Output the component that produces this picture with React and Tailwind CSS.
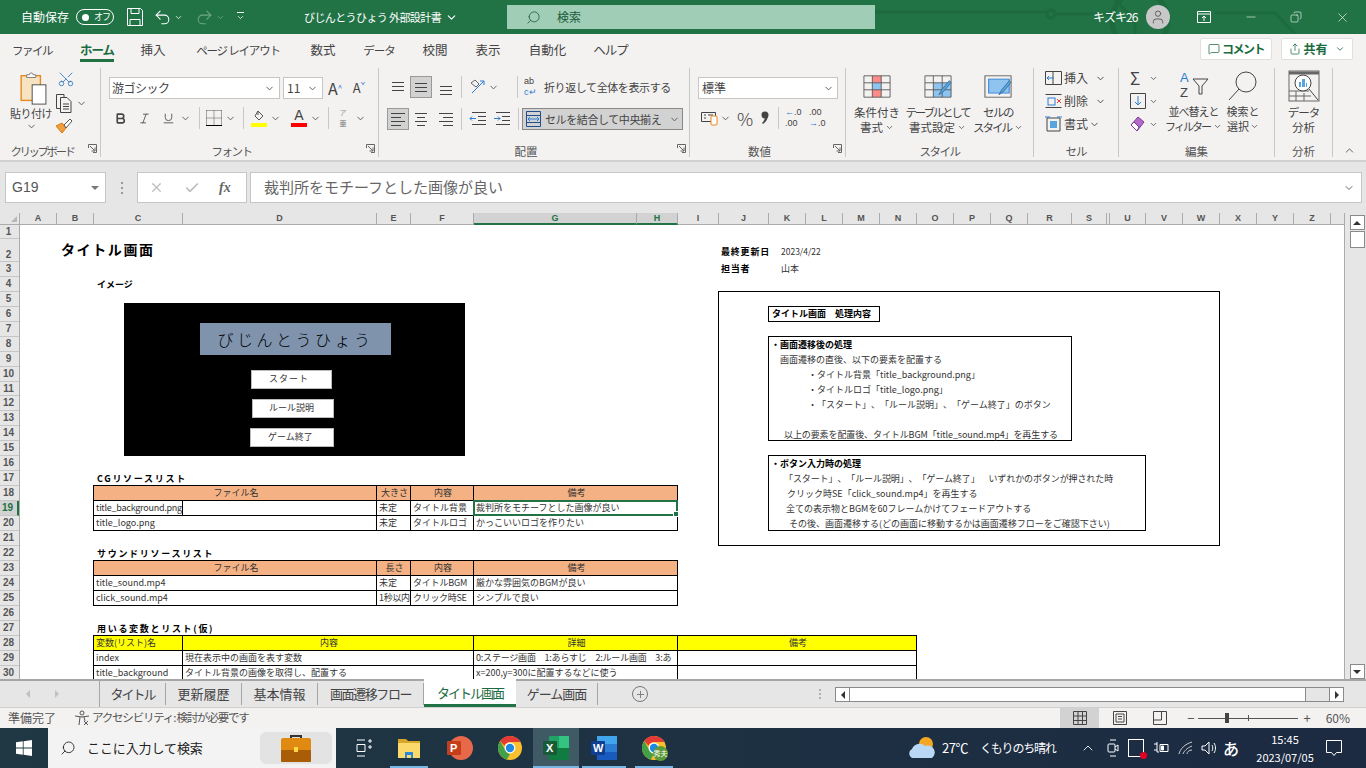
import React from "react";
import {
  ChevronDown, ChevronUp, Search, Undo2, Redo2, User, Minus, Copy, X, Check, MessageSquare, Share,
  Scissors, Bold, Italic, Underline, Plus,
} from "lucide-react";

const Chev = ({ className = "text-[#555]", size = 11 }) => (
  <ChevronDown size={size} strokeWidth={2} className={`shrink-0 ${className}`} />
);

// three short rules, used by all the alignment buttons
const Lines = ({ rows }) => (
  <svg width="18" height="18" viewBox="0 0 18 18" stroke="#444" strokeWidth="1">
    {rows.map((r, i) => (
      <line key={i} x1={r[0]} x2={r[1]} y1={r[2] + 0.5} y2={r[2] + 0.5} />
    ))}
  </svg>
);

const Launcher = () => (
  <svg width="9" height="9" viewBox="0 0 9 9" fill="none" stroke="#666" className="absolute right-[3px] bottom-[4px]">
    <path d="M.5 4V.5h8v8H5M2 2l5 5M7 3.5V7H3.5" />
  </svg>
);

const Group = ({ width, label, labelClass = "", launcher, children }) => (
  <div className={`relative flex h-[89px] shrink-0 flex-col border-r border-[#c8c8c8] ${width}`}>
    <div className="h-[76px]">{children}</div>
    <div className={`mt-[2px] h-[12px] text-center text-[11.5px] leading-[12px] whitespace-nowrap text-[#555] ${labelClass}`}>{label}</div>
    {launcher && <Launcher />}
  </div>
);

const Sep = ({ className }) => <div className={`h-[22px] w-px shrink-0 bg-[#c8c8c8] ${className}`} />;

const PasteIcon = () => (
  <svg width="30" height="33" viewBox="0 0 30 36" fill="none" className="ml-[5px]">
    <rect x="1" y="4" width="21" height="27" fill="#f7e3c0" stroke="#e8871e" strokeWidth="1.5" />
    <path d="M7 6V3h3a2 2 0 0 1 4 0h3v3z" fill="#fff" stroke="#777" />
    <rect x="13" y="14" width="15" height="21" fill="#fff" stroke="#444" />
  </svg>
);

const CopyIcon = () => (
  <svg width="18" height="20" viewBox="0 0 18 20" fill="none" stroke="#444">
    <path d="M5 15.5H1.5V1.5H9V4" />
    <path d="M5.5 4.5H12l4 4v11H5.5z" />
    <path d="M8 11h6M8 13.5h6M8 16h6" />
  </svg>
);

const BrushIcon = () => (
  <svg width="18" height="18" viewBox="0 0 18 18" fill="none">
    <path d="M1 9l6 7 4-5-4-5z" fill="#f2a03d" stroke="#d67a14" />
    <path d="M9 8l6-6 2 2-6 7z" fill="#fff" stroke="#555" />
  </svg>
);

const Grid = ({ fill, tint }) => (
  <svg width="28" height="23" viewBox="0 0 30 28" fill="none" preserveAspectRatio="none">
    {fill}
    <path d="M1 1h28v26H1zM1 9.5h28M1 18h28M10 1v26M19.5 1v26" stroke="#555" />
    {tint}
  </svg>
);

const Pen = () => (
  <path d="M16 24l3-6 8-11 2 2-8 11z" fill="#5aa4dd" stroke="#3a6f9c" />
);

const SmallIcon = ({ children }) => (
  <svg width="18" height="16" viewBox="0 0 18 16" fill="none">{children}</svg>
);

const Chrome = ({ size = 24 }) => (
  <svg width={size} height={size} viewBox="0 0 24 24">
    <circle cx="12" cy="12" r="12" fill="#fbc02d" />
    <path d="M12 0a12 12 0 0 1 10.4 6H12a6 6 0 0 0-5.6 3.8L2.2 5A12 12 0 0 1 12 0z" fill="#e53935" />
    <path d="M2.2 5l5.2 9.2A6 6 0 0 0 12 18l-3.2 5.6A12 12 0 0 1 2.2 5z" fill="#43a047" />
    <circle cx="12" cy="12" r="5.4" fill="#fff" />
    <circle cx="12" cy="12" r="4.2" fill="#1e88e5" />
  </svg>
);

const TitleBar = () => (
  <div className="relative flex h-[34px] shrink-0 items-center whitespace-nowrap bg-[#217346] text-white">
    <svg width="491" height="34" viewBox="0 0 491 34" fill="none" stroke="#1c6a3e" strokeWidth="3" className="absolute top-0 right-0">
      <path d="M0 12h172M180 14l60 0M240 0l20 20v14M340 13h60l20 21" />
      <circle cx="176" cy="14" r="4" />
      <circle cx="265" cy="20" r="28" strokeWidth="5" />
    </svg>
    <span className="ml-[21px] w-[48px] shrink-0 text-[12px]">自動保存</span>
    <div className="ml-[7px] flex h-[16px] w-[38px] shrink-0 items-center rounded-full border border-white pl-[5px] text-[9px]">
      <span className="h-[7px] w-[7px] rounded-full bg-white" />
      <span className="ml-[5px] tracking-[-1px]">オフ</span>
    </div>
    <svg width="16" height="18" viewBox="0 0 16 18" fill="none" stroke="#fff" className="ml-[13px] shrink-0">
      <path d="M.5.5h13l2 2v15H.5zM4 .5v5h8v-5M3 17.5v-6h10v6" />
    </svg>
    <Undo2 size={19} strokeWidth={1.3} className="ml-[10px] shrink-0" />
    <Chev className="ml-[2px] text-white" size={9} />
    <Redo2 size={19} strokeWidth={1.3} className="ml-[12px] shrink-0 text-[#6fa888]" />
    <Chev className="ml-[2px] text-[#6fa888]" size={9} />
    <div className="ml-[7px] flex w-[16px] shrink-0 flex-col items-center">
      <div className="h-px w-[7px] bg-white" />
      <Chev className="text-white" size={9} />
    </div>
    <span className="ml-[56px] w-[138px] shrink-0 text-[11px] tracking-[-0.6px]">びじんとうひょう 外部設計書</span>
    <Chev className="ml-[3px] text-white" size={13} />
    <div className="relative ml-[49px] flex h-[24px] w-[368px] shrink-0 items-center bg-[#a0cdb5] text-[#1d5c3a]">
      <Search size={15} strokeWidth={1.3} className="ml-[19px] -scale-x-100" />
      <span className="ml-[16px] text-[12px]">検索</span>
    </div>
    <span className="relative ml-[218px] w-[44px] shrink-0 text-[12px] tracking-[-1px]">キズキ26</span>
    <div className="relative ml-[9px] flex h-[24px] w-[24px] shrink-0 items-center justify-center rounded-full bg-[#c8c8c8]">
      <User size={16} strokeWidth={1.3} className="text-[#555]" />
    </div>
    <svg width="14" height="14" viewBox="0 0 14 14" fill="none" stroke="#fff" className="relative ml-[27px] shrink-0">
      <path d="M.5 1.5h13v11H.5zM.5 4h13M7 11V6M5 8l2-2 2 2" />
    </svg>
    <Minus size={14} strokeWidth={1} className="relative ml-[33px] shrink-0" />
    <Copy size={12} strokeWidth={1.2} className="relative ml-[32px] shrink-0 -scale-x-100" />
    <X size={15} strokeWidth={1} className="relative ml-[33px] shrink-0" />
  </div>
);

const TABS = [
  ["ファイル", "w-[38px] ml-[13px] text-[11.5px] tracking-[-1.5px]"],
  ["ホーム", "w-[34px] ml-[29px] font-bold text-[#1b6b40] border-b-[3px] border-[#217346] tracking-[-1px]"],
  ["挿入", "w-[26px] ml-[26px]"],
  ["ページ レイアウト", "w-[86px] ml-[29px] text-[11.5px] tracking-[-1.2px]"],
  ["数式", "w-[26px] ml-[29px]"],
  ["データ", "w-[32px] ml-[27px] text-[11.5px] tracking-[-1px]"],
  ["校閲", "w-[26px] ml-[27px]"],
  ["表示", "w-[26px] ml-[27px]"],
  ["自動化", "w-[39px] ml-[27px]"],
  ["ヘルプ", "w-[33px] ml-[27px] tracking-[-1px]"],
];

const TabRow = () => (
  <div className="flex h-[32px] shrink-0 items-start bg-[#f3f2f1] text-[12.5px] whitespace-nowrap text-[#444]">
    {TABS.map(([t, c]) => (
      <div key={t} className={`mt-[7px] flex h-[21px] justify-center leading-[18px] ${c}`}>{t}</div>
    ))}
    <div className="mt-[4px] ml-auto flex h-[22px] w-[72px] items-center justify-center gap-[2px] rounded-[2px] border border-[#e1dfdd] bg-white text-[12px] font-bold tracking-[-1.5px] text-[#1b6b40]">
      <MessageSquare size={12} strokeWidth={1.5} />コメント
    </div>
    <div className="mt-[4px] mr-[13px] ml-[9px] flex h-[22px] w-[72px] items-center justify-center gap-[2px] rounded-[2px] border border-[#e1dfdd] bg-white text-[12px] font-bold text-[#1b6b40]">
      <Share size={12} strokeWidth={1.5} />共有<Chev className="ml-[5px] text-[#1b6b40]" size={10} />
    </div>
  </div>
);

const Ribbon = () => (
  <div className="flex h-[96px] shrink-0 border-b-2 border-[#d2d0ce] bg-[#f3f2f1] pt-[2px] text-[#444]">
    {/* clipboard */}
    <Group width="w-[101px]" label="クリップボード" labelClass="pr-[16px] tracking-[-2.5px]" launcher>
      <div className="flex">
        <div className="flex w-[55px] flex-col items-center pt-[4px] pl-[7px]">
          <PasteIcon />
          <span className="text-[11px] leading-[16px] tracking-[-0.5px] whitespace-nowrap">貼り付け</span>
          <Chev />
        </div>
        <div className="flex flex-col items-start pt-[2px]">
          <Scissors size={18} strokeWidth={1.2} className="ml-[2px] -rotate-90 text-[#3a7fc0]" />
          <div className="mt-[5px] flex items-center"><CopyIcon /><Chev className="ml-[3px] text-[#555]" /></div>
          <div className="mt-[4px]"><BrushIcon /></div>
        </div>
      </div>
    </Group>

    {/* font */}
    <Group width="w-[278px]" label="フォント" labelClass="pr-[16px] tracking-[-1.5px]" launcher>
      <div className="flex items-center pt-[9px] pl-[8px]">
        <div className="flex h-[22px] w-[171px] items-center justify-between border border-[#c8c6c4] bg-white pr-[4px] pl-[2px] text-[12px] tracking-[-0.5px]">游ゴシック<Chev /></div>
        <div className="ml-[3px] flex h-[22px] w-[40px] items-center justify-between border border-[#c8c6c4] bg-white pr-[4px] pl-[3px] text-[12px]">11<Chev /></div>
        <span className="w-[24px] text-center text-[16px] leading-[22px]">A<sup className="text-[8px] text-[#2b7cd3]">^</sup></span>
        <span className="w-[24px] text-center text-[13px] leading-[22px]">A<sup className="text-[8px] text-[#2b7cd3]">ˇ</sup></span>
      </div>
      <div className="mt-[8px] flex h-[22px] items-center pl-[13px]">
        <Bold size={13} strokeWidth={3} />
        <Italic size={13} strokeWidth={1.5} className="ml-[11px]" />
        <Underline size={13} strokeWidth={1.5} className="ml-[11px]" />
        <Chev className="ml-[5px] text-[#555]" />
        <Sep className="ml-[8px]" />
        <svg width="16" height="16" viewBox="0 0 16 16" fill="none" stroke="#555" strokeDasharray="1 1" className="ml-[6px]">
          <path d="M.5.5h15M.5 8h15M8 .5v15M.5.5v15M15.5.5v15" />
          <path d="M0 15.5h16" stroke="#000" strokeDasharray="none" />
        </svg>
        <Chev className="ml-[3px] text-[#555]" />
        <Sep className="ml-[7px]" />
        <div className="ml-[7px] flex w-[16px] flex-col items-center">
          <svg width="14" height="12" viewBox="0 0 14 12" fill="none" stroke="#555"><path d="M6 1l5 5-4 4-4-4zM6 1v4" /></svg>
          <div className="mt-[1px] h-[4px] w-[16px] bg-[#ffff00]" />
        </div>
        <Chev className="ml-[3px] text-[#555]" />
        <div className="ml-[10px] flex w-[16px] flex-col items-center font-['Liberation_Sans',sans-serif] text-[14px] leading-[13px]">
          A<div className="mt-[1px] h-[4px] w-[16px] bg-[#ff0000]" />
        </div>
        <Chev className="ml-[3px] text-[#555]" />
        <Sep className="ml-[7px]" />
        <div className="ml-[8px] flex w-[12px] flex-col text-center text-[7px] leading-[11px] text-[#999]">
          <span>ア</span><span className="font-bold">亜</span>
        </div>
        <Chev className="ml-[6px] text-[#555]" />
      </div>
    </Group>

    {/* alignment */}
    <Group width="w-[311px]" label="配置" labelClass="pr-[16px]" launcher>
      <div className="mt-[8px] flex h-[22px] items-center pl-[8px]">
        <div className="flex h-[22px] w-[22px] items-center justify-center"><Lines rows={[[3, 15, 4], [3, 15, 8], [3, 15, 12]]} /></div>
        <div className="ml-px flex h-[22px] w-[22px] items-center justify-center border border-[#999] bg-[#d2d2d2]"><Lines rows={[[3, 15, 5], [3, 15, 9], [3, 15, 13]]} /></div>
        <div className="ml-[3px] flex h-[22px] w-[22px] items-center justify-center"><Lines rows={[[3, 15, 8], [3, 15, 12], [3, 15, 16]]} /></div>
        <Sep className="ml-[4px]" />
        <svg width="18" height="18" viewBox="0 0 18 18" fill="none" className="ml-[7px]">
          <path d="M3 15L15 3M11 3h4v4" stroke="#2b7cd3" />
          <path d="M2 5l4-3 4 4-3 3z" stroke="#666" />
        </svg>
        <Chev className="ml-[1px] text-[#555]" />
        <Sep className="ml-[18px]" />
        <div className="ml-[6px] flex w-[20px] shrink-0 flex-col font-['Liberation_Sans',sans-serif] text-[9px] leading-[11px]">
          <span>ab</span><span className="text-[#2b7cd3]">c↵</span>
        </div>
        <span className="text-[11px] tracking-[-0.4px] whitespace-nowrap">折り返して全体を表示する</span>
      </div>
      <div className="mt-[10px] flex h-[22px] items-center pl-[8px]">
        <div className="flex h-[22px] w-[22px] items-center justify-center border border-[#999] bg-[#d2d2d2]"><Lines rows={[[2, 16, 3], [2, 12, 7], [2, 16, 11], [2, 12, 15]]} /></div>
        <div className="ml-px flex h-[22px] w-[22px] items-center justify-center"><Lines rows={[[3, 15, 3], [5, 13, 7], [3, 15, 11], [5, 13, 15]]} /></div>
        <div className="ml-[3px] flex h-[22px] w-[22px] items-center justify-center"><Lines rows={[[2, 16, 3], [6, 16, 7], [2, 16, 11], [6, 16, 15]]} /></div>
        <Sep className="ml-[4px]" />
        <svg width="18" height="16" viewBox="0 0 18 16" fill="none" className="ml-[7px]">
          <path d="M3 1.5h14M9 5.5h8M9 9.5h8M3 13.5h14" stroke="#444" /><path d="M7 7.5H1M3 5.5l-2 2 2 2" stroke="#2b7cd3" />
        </svg>
        <svg width="18" height="16" viewBox="0 0 18 16" fill="none" className="ml-[6px]">
          <path d="M3 1.5h14M9 5.5h8M9 9.5h8M3 13.5h14" stroke="#444" /><path d="M1 7.5h6M5 5.5l2 2-2 2" stroke="#2b7cd3" />
        </svg>
        <Sep className="ml-[7px]" />
        <div className="ml-[3px] flex h-[22px] w-[161px] items-center border border-[#8a8886] bg-[#d2d2d2] pl-[3px] text-[11px] tracking-[-0.4px] whitespace-nowrap">
          <svg width="15" height="16" viewBox="0 0 15 16" fill="none" className="shrink-0">
            <path d="M.5.5h14v15H.5zM.5 4.5h14M.5 11.5h14" stroke="#1e4e8c" />
            <path d="M2 8h11M4 6L2 8l2 2M11 6l2 2-2 2" stroke="#2b7cd3" />
          </svg>
          <span className="ml-[4px]">セルを結合して中央揃え</span>
          <Chev className="ml-[8px] text-[#555]" />
        </div>
      </div>
    </Group>

    {/* number */}
    <Group width="w-[156px]" label="数値" labelClass="pr-[16px]" launcher>
      <div className="mt-[9px] ml-[8px] flex h-[22px] w-[140px] items-center justify-between border border-[#c8c6c4] bg-white pr-[3px] pl-[3px] text-[12px]">標準<Chev /></div>
      <div className="mt-[8px] flex h-[22px] items-center pl-[11px]">
        <svg width="18" height="16" viewBox="0 0 18 16" fill="none" stroke="#444">
          <path d="M.5 2.5h14v9H.5z" /><path d="M3 5h2M3 8h2M7 5h5" />
          <rect x="10" y="6" width="6" height="9" rx="1" fill="#fff" stroke="#e8871e" />
        </svg>
        <Chev className="ml-[1px] text-[#555]" />
        <span className="ml-[6px] w-[16px] text-center text-[18px] leading-[22px] font-light">%</span>
        <svg width="8" height="14" viewBox="0 0 8 14" fill="#444" className="ml-[8px]">
          <circle cx="4" cy="4" r="3.5" /><path d="M7 4c0 4-2 7-5 9l-1-1c2-2 3-4 3-6z" />
        </svg>
        <Sep className="ml-[9px]" />
        <div className="ml-[6px] flex w-[16px] flex-col font-['Liberation_Sans',sans-serif] text-[9px] leading-[11px] whitespace-nowrap">
          <span><span className="text-[#2b7cd3]">←</span>.0</span><span>.00</span>
        </div>
        <div className="ml-[8px] flex w-[16px] flex-col font-['Liberation_Sans',sans-serif] text-[9px] leading-[11px] whitespace-nowrap">
          <span>.00</span><span><span className="text-[#2b7cd3]">→</span>.0</span>
        </div>
      </div>
    </Group>

    {/* styles */}
    <Group width="w-[188px]" label="スタイル" labelClass="tracking-[-1.5px]">
      <div className="flex pt-[7px] text-center text-[11.5px] leading-[15px] whitespace-nowrap">
        <div className="flex w-[62px] flex-col items-center">
          <Grid fill={<><rect x="10" y="1" width="9.5" height="8.5" fill="#ff8a8a" /><rect x="10" y="9.5" width="9.5" height="8.5" fill="#8ec4ef" /><rect x="10" y="18" width="9.5" height="9" fill="#ff8a8a" /></>} />
          <span className="mt-[7px]">条件付き</span>
          <span className="flex items-center">書式<Chev className="ml-[2px]" size={9} /></span>
        </div>
        <div className="flex w-[59px] flex-col items-center">
          <Grid fill={<rect x="10" y="9.5" width="19" height="17.5" fill="#8ec4ef" />} tint={<Pen />} />
          <span className="mt-[7px] tracking-[-2.2px]">テーブルとして</span>
          <span className="flex items-center">書式設定<Chev className="ml-[2px]" size={9} /></span>
        </div>
        <div className="flex w-[62px] flex-col items-center">
          <svg width="28" height="23" viewBox="0 0 30 28" fill="none" preserveAspectRatio="none">
            <rect x="1" y="1" width="28" height="26" stroke="#555" />
            <rect x="5" y="5" width="22" height="17" fill="#8ec4ef" stroke="#2b7cd3" /><Pen />
          </svg>
          <span className="mt-[7px] tracking-[-1.5px]">セルの</span>
          <span className="flex items-center tracking-[-2px]">スタイル<Chev className="ml-[3px]" size={9} /></span>
        </div>
      </div>
    </Group>

    {/* cells */}
    <Group width="w-[85px]" label="セル" labelClass="tracking-[-1px]">
      <div className="flex flex-col pl-[11px] text-[12px] leading-[16px]">
        <div className="flex h-[20px] items-center">
          <SmallIcon><path d="M.5 1.5h16v13H.5zM8 1.5v13" stroke="#444" /><path d="M9 8H2M4 6L2 8l2 2" stroke="#2b7cd3" /></SmallIcon>
          <span className="ml-[1px]">挿入</span><Chev className="ml-[7px]" />
        </div>
        <div className="mt-[3px] flex h-[20px] items-center">
          <SmallIcon><path d="M.5 1.5h16M.5 14.5h16" stroke="#444" /><rect x="3" y="5" width="7" height="7" stroke="#2b7cd3" /><path d="M12 6l4 4m0-4l-4 4" stroke="#e53935" /></SmallIcon>
          <span className="ml-[1px]">削除</span><Chev className="ml-[7px]" />
        </div>
        <div className="mt-[3px] flex h-[20px] items-center">
          <SmallIcon><path d="M2 2h13v13H2z" stroke="#444" /><rect x="5" y="5" width="7" height="7" fill="#5aa4dd" /><path d="M0 1h5M12 1h5" stroke="#2b7cd3" /></SmallIcon>
          <span className="ml-[1px]">書式</span><Chev className="ml-[1px]" />
        </div>
      </div>
    </Group>

    {/* editing */}
    <Group width="w-[156px]" label="編集">
      <div className="flex">
        <div className="flex w-[50px] flex-col pl-[11px]">
          <div className="flex h-[20px] items-center text-[17px]"><span className="w-[16px]">Σ</span><Chev className="ml-[3px]" size={9} /></div>
          <div className="mt-[3px] flex h-[20px] items-center">
            <svg width="16" height="16" viewBox="0 0 16 16" fill="none"><path d="M.5.5h15v15H.5z" stroke="#444" /><path d="M8 3v9M5 9l3 3 3-3" stroke="#2b7cd3" /></svg>
            <Chev className="ml-[3px]" size={9} />
          </div>
          <div className="mt-[3px] flex h-[20px] items-center">
            <svg width="16" height="16" viewBox="0 0 16 16"><path d="M1 9l7-8 6 5-7 9z" fill="#b46ac9" stroke="#7a3a90" /><path d="M4 6l5 5 -2 4-6-6z" fill="#fff" stroke="#7a3a90" /></svg>
            <Chev className="ml-[3px]" size={9} />
          </div>
        </div>
        <div className="flex w-[49px] flex-col items-center pt-[3px] text-[11px] leading-[15px] whitespace-nowrap">
          <svg width="32" height="30" viewBox="0 0 32 30" fill="none">
            <text x="2" y="11" fontSize="13" fill="#2b7cd3" fontFamily="Liberation Sans">A</text>
            <text x="2" y="26" fontSize="13" fill="#444" fontFamily="Liberation Sans">Z</text>
            <path d="M15 8h15l-6 7v8h-3v-8z" stroke="#444" />
          </svg>
          <span className="mt-[3px] tracking-[-1px]">並べ替えと</span>
          <span className="flex items-center tracking-[-2px]">フィルター<Chev className="ml-[3px]" size={9} /></span>
        </div>
        <div className="flex w-[50px] flex-col items-center pt-[3px] text-[11px] leading-[15px] whitespace-nowrap">
          <svg width="30" height="30" viewBox="0 0 30 30" fill="none" stroke="#444"><circle cx="18" cy="11" r="10" /><path d="M11 18L1 29" /></svg>
          <span className="mt-[3px]">検索と</span>
          <span className="flex items-center">選択<Chev className="ml-[1px]" size={9} /></span>
        </div>
      </div>
    </Group>

    {/* analysis */}
    <Group width="w-[58px]" label="分析">
      <div className="flex flex-col items-center pt-[2px] text-[11.5px] leading-[15px]">
        <svg width="32" height="32" viewBox="0 0 32 32" fill="none" stroke="#666">
          <rect x="1" y="1" width="30" height="30" fill="#f3f2f1" />
          <path d="M1 3h30" strokeWidth="3" /><path d="M1 21h20M1 26h22M8 21v10M16 23v8" />
          <circle cx="15" cy="13" r="8" fill="#fff" stroke="#444" />
          <path d="M21 19l9 11" stroke="#444" />
          <path d="M11 12h2v5h-2zM14 9h3v8h-3zM18 13h1v4h-1z" fill="#5aa4dd" stroke="none" />
        </svg>
        <span className="mt-[3px] tracking-[-1px]">データ</span>
        <span>分析</span>
      </div>
    </Group>
    <div className="flex flex-1 items-end justify-center pb-[3px]"><ChevronUp size={13} strokeWidth={1.5} /></div>
  </div>
);

const FormulaBar = () => (
  <div className="flex h-[51px] shrink-0 items-start bg-[#e6e6e6] pt-[10px] pl-[5px]">
    <div className="flex h-[31px] w-[101px] items-center justify-between border border-[#c6c6c6] bg-white pr-[6px] pl-[6px] font-['Liberation_Sans',sans-serif] text-[14px] text-[#555]">
      G19
      <div className="h-0 w-0 border-x-[4px] border-t-[4px] border-x-transparent border-t-[#777]" />
    </div>
    <div className="ml-[15px] flex h-[31px] w-[2px] flex-col items-center justify-center gap-[3px]">
      <div className="h-[2px] w-[2px] bg-[#999]" /><div className="h-[2px] w-[2px] bg-[#999]" /><div className="h-[2px] w-[2px] bg-[#999]" />
    </div>
    <div className="ml-[14px] flex h-[31px] w-[110px] items-center border border-[#c6c6c6] bg-white text-[#bdbdbd]">
      <X size={15} strokeWidth={2} className="ml-[11px]" />
      <Check size={16} strokeWidth={2.5} className="ml-[20px]" />
      <span className="ml-[19px] font-['Liberation_Serif',serif] text-[14px] font-bold text-[#666] italic">fx</span>
    </div>
    <div className="ml-[3px] flex h-[31px] w-[1112px] items-center justify-between border border-[#c6c6c6] bg-white pr-[6px] pl-[13px] text-[15px] text-[#666]">
      裁判所をモチーフとした画像が良い
      <Chev className="text-[#666]" size={12} />
    </div>
  </div>
);

const COLS = [
  ["A", "w-[37px]"], ["B", "w-[37px]"], ["C", "w-[89px]"], ["D", "w-[194px]"], ["E", "w-[34px]"], ["F", "w-[63px]"],
  ["G", "w-[163px]"], ["H", "w-[41px]"], ["I", "w-[41px]"], ["J", "w-[50px]"], ["K", "w-[37px]"], ["L", "w-[37px]"],
  ["M", "w-[37px]"], ["N", "w-[37px]"], ["O", "w-[37px]"], ["P", "w-[37px]"], ["Q", "w-[37px]"], ["R", "w-[44px]"],
  ["S", "w-[35px]"], ["", "w-[3px]"], ["U", "w-[36px]"], ["V", "w-[37px]"], ["W", "w-[37px]"], ["X", "w-[37px]"],
  ["Y", "w-[37px]"], ["Z", "w-[37px]"],
];

const ROWS = Array.from({ length: 30 }, (_, i) => i + 1);

const ColumnHeader = () => (
  <div className="flex h-[12px] w-[1344px] shrink-0 font-['Liberation_Sans',sans-serif] text-[9px] leading-[11px] font-bold text-[#555]">
    <div className="relative w-[20px] border-r border-b border-[#ababab]">
      <div className="absolute right-[2px] bottom-[2px] h-0 w-0 border-b-[6px] border-l-[6px] border-b-[#b8b8b8] border-l-transparent" />
    </div>
    {COLS.map(([c, w]) => {
      const on = c === "G" || c === "H";
      return (
        <div
          key={c + w}
          className={`shrink-0 border-r border-[#ababab] text-center ${w} ${on ? "border-b-2 border-b-[#217346] bg-[#d2d2d2] text-[#217346]" : "border-b"}`}
        >
          {c}
        </div>
      );
    })}
    <div className="flex-1 border-b border-[#ababab]" />
  </div>
);

const RowHeader = () => (
  <div className="flex w-[20px] shrink-0 flex-col overflow-hidden border-r border-[#ababab] font-['Liberation_Sans',sans-serif] text-[10px] font-bold text-[#555]">
    {ROWS.map((r) => {
      const h = r === 2 ? "h-[23px] pt-[9px]" : r === 1 || r === 11 ? "h-[14px]" : "h-[15px]";
      return (
        <div
          key={r}
          className={`shrink-0 border-b border-[#c6c6c6] pr-[2px] text-center leading-[14px] ${h} ${r === 19 ? "border-r-2 border-r-[#217346] bg-[#d2d2d2] text-[#217346]" : ""}`}
        >
          {r}
        </div>
      );
    })}
  </div>
);

const Cell = ({ className = "", children }) => (
  <div className={`-mt-px overflow-hidden border-t border-r border-b border-black pl-[2px] text-[9px] leading-[13px] whitespace-nowrap text-[#333] ${className}`}>
    {children}
  </div>
);

const Heading = ({ className, children }) => (
  <div className={`pl-[3px] text-[9px] leading-[15px] font-bold tracking-[1.7px] whitespace-nowrap text-black ${className}`}>
    {children}
  </div>
);

const Note = ({ className = "", children }) => (
  <div className={`h-[15px] text-[9px] leading-[15px] whitespace-nowrap text-[#333] ${className}`}>{children}</div>
);

const ImageShape = () => (
  <div className="absolute top-[78px] left-[104px] flex h-[153px] w-[341px] flex-col items-start bg-black text-[#333]">
    <div className="mt-[20px] ml-[76px] flex h-[32px] w-[191px] items-center justify-center bg-[#7f93ad] text-[16px] font-light tracking-[3.5px] text-black">
      びじんとうひょう
    </div>
    <div className="mt-[15px] ml-[127px] flex h-[19px] w-[81px] justify-start border border-[#bbb] bg-white pl-[17px] text-[9px] leading-[16px] tracking-[1px]">スタート</div>
    <div className="mt-[10px] ml-[128px] flex h-[19px] w-[82px] justify-start border border-[#bbb] bg-white pl-[16px] text-[9px] leading-[16px]">ルール説明</div>
    <div className="mt-[10px] ml-[126px] flex h-[19px] w-[84px] justify-start border border-[#bbb] bg-white pl-[17px] text-[9px] leading-[16px]">ゲーム終了</div>
  </div>
);

const ProcessShape = () => (
  <div className="absolute top-[66px] left-[698px] flex h-[255px] w-[502px] flex-col items-start border border-black bg-white pt-[14px] pl-[49px]">
    <div className="h-[16px] w-[112px] border border-black pl-[3px] text-[9px] leading-[13px] font-bold whitespace-nowrap text-black">
      タイトル画面　処理内容
    </div>
    <div className="mt-[14px] h-[105px] w-[304px] border border-black">
      <Note className="pl-[2px] font-bold text-black">・画面遷移後の処理</Note>
      <Note className="pl-[11px]">画面遷移の直後、以下の要素を配置する</Note>
      <Note className="pl-[39px]">・タイトル背景「title_background.png」</Note>
      <Note className="pl-[39px]">・タイトルロゴ「title_logo.png」</Note>
      <Note className="pl-[39px]">・「スタート」、「ルール説明」、「ゲーム終了」のボタン</Note>
      <Note />
      <Note className="pl-[15px] tracking-[-0.1px]">以上の要素を配置後、タイトルBGM「title_sound.mp4」を再生する</Note>
    </div>
    <div className="mt-[14px] h-[76px] w-[378px] border border-black">
      <Note className="pl-[2px] font-bold text-black">・ボタン入力時の処理</Note>
      <Note className="pl-[15px] tracking-[-0.1px]">「スタート」、「ルール説明」、「ゲーム終了」　いずれかのボタンが押された時</Note>
      <Note className="pl-[18px]">クリック時SE「click_sound.mp4」を再生する</Note>
      <Note className="pl-[17px]">全ての表示物とBGMを60フレームかけてフェードアウトする</Note>
      <Note className="pl-[20px]">その後、画面遷移する(どの画面に移動するかは画面遷移フローをご確認下さい)</Note>
    </div>
  </div>
);

const Sheet = () => (
  <div className="relative grid h-[454px] w-[1324px] grid-cols-[37px_37px_89px_194px_34px_63px_163px_41px_41px_50px_repeat(8,37px)_44px_35px_3px_36px_repeat(5,37px)_13px] grid-rows-[14px_23px_repeat(8,15px)_14px_repeat(19,15px)] overflow-hidden bg-white">
    <div className="col-start-2 col-end-5 row-start-2 pl-[4px] text-[14px] leading-[21px] font-bold tracking-[1.6px] text-black">タイトル画面</div>
    <Note className="col-start-3 col-end-5 row-start-4 pl-[3px] font-bold text-black">イメージ</Note>
    <Note className="col-start-10 row-start-2 mb-[3px] self-end pl-[2px] font-bold tracking-[0.8px] text-black">最終更新日</Note>
    <div className="col-start-11 col-end-14 row-start-2 mb-[3px] self-end pl-[12px] text-[8.5px] leading-[15px] text-[#333]">2023/4/22</div>
    <Note className="col-start-10 row-start-3 -mt-px pl-[2px] font-bold tracking-[0.8px] text-black">担当者</Note>
    <Note className="col-start-11 row-start-3 -mt-px pl-[12px]">山本</Note>

    <Heading className="col-start-3 col-end-6 row-start-17">CGリソースリスト</Heading>
    <Cell className="col-start-3 col-end-5 row-start-18 -ml-px border-l bg-[#f4b183] pl-0 text-center">ファイル名</Cell>
    <Cell className="col-start-5 row-start-18 bg-[#f4b183] text-center">大きさ</Cell>
    <Cell className="col-start-6 row-start-18 bg-[#f4b183] text-center">内容</Cell>
    <Cell className="col-start-7 col-end-9 row-start-18 bg-[#f4b183] text-center">備考</Cell>
    <Cell className="col-start-3 row-start-19 -ml-px border-l tracking-[-0.25px]">title_background.png</Cell>
    <Cell className="col-start-4 row-start-19" />
    <Cell className="col-start-5 row-start-19">未定</Cell>
    <Cell className="col-start-6 row-start-19">タイトル背景</Cell>
    <Cell className="col-start-7 col-end-9 row-start-19">裁判所をモチーフとした画像が良い</Cell>
    <Cell className="col-start-3 col-end-5 row-start-20 -ml-px border-l">title_logo.png</Cell>
    <Cell className="col-start-5 row-start-20">未定</Cell>
    <Cell className="col-start-6 row-start-20">タイトルロゴ</Cell>
    <Cell className="col-start-7 col-end-9 row-start-20">かっこいいロゴを作りたい</Cell>

    <Heading className="col-start-3 col-end-6 row-start-22">サウンドリソースリスト</Heading>
    <Cell className="col-start-3 col-end-5 row-start-23 -ml-px border-l bg-[#f4b183] pl-0 text-center">ファイル名</Cell>
    <Cell className="col-start-5 row-start-23 bg-[#f4b183] text-center">長さ</Cell>
    <Cell className="col-start-6 row-start-23 bg-[#f4b183] text-center">内容</Cell>
    <Cell className="col-start-7 col-end-9 row-start-23 bg-[#f4b183] text-center">備考</Cell>
    <Cell className="col-start-3 col-end-5 row-start-24 -ml-px border-l">title_sound.mp4</Cell>
    <Cell className="col-start-5 row-start-24">未定</Cell>
    <Cell className="col-start-6 row-start-24 tracking-[-0.2px]">タイトルBGM</Cell>
    <Cell className="col-start-7 col-end-9 row-start-24">厳かな雰囲気のBGMが良い</Cell>
    <Cell className="col-start-3 col-end-5 row-start-25 -ml-px border-l">click_sound.mp4</Cell>
    <Cell className="col-start-5 row-start-25 pl-0 tracking-[-0.3px]">1秒以内</Cell>
    <Cell className="col-start-6 row-start-25 tracking-[-0.3px]">クリック時SE</Cell>
    <Cell className="col-start-7 col-end-9 row-start-25">シンプルで良い</Cell>

    <Heading className="col-start-3 col-end-6 row-start-27">用いる変数とリスト(仮)</Heading>
    <Cell className="col-start-3 row-start-28 -ml-px border-l bg-[#ffff00]">変数(リスト)名</Cell>
    <Cell className="col-start-4 col-end-7 row-start-28 bg-[#ffff00] text-center">内容</Cell>
    <Cell className="col-start-7 col-end-9 row-start-28 bg-[#ffff00] text-center">詳細</Cell>
    <Cell className="col-start-9 col-end-15 row-start-28 bg-[#ffff00] text-center">備考</Cell>
    <Cell className="col-start-3 row-start-29 -ml-px border-l">index</Cell>
    <Cell className="col-start-4 col-end-7 row-start-29">現在表示中の画面を表す変数</Cell>
    <Cell className="col-start-7 col-end-9 row-start-29 tracking-[-0.2px]">0:ステージ画面　1:あらすじ　2:ルール画面　3:あ</Cell>
    <Cell className="col-start-9 col-end-15 row-start-29" />
    <Cell className="col-start-3 row-start-30 -ml-px border-l">title_background</Cell>
    <Cell className="col-start-4 col-end-7 row-start-30">タイトル背景の画像を取得し、配置する</Cell>
    <Cell className="col-start-7 col-end-9 row-start-30">x=200,y=300に配置するなどに使う</Cell>
    <Cell className="col-start-9 col-end-15 row-start-30" />

    <ImageShape />
    <ProcessShape />

    {/* selection of G19 */}
    <div className="pointer-events-none relative col-start-7 col-end-9 row-start-19 -mt-px -ml-px border-2 border-[#217346]">
      <div className="absolute -right-[3px] -bottom-[3px] h-[6px] w-[6px] border border-white bg-[#217346]" />
    </div>
  </div>
);

const VScroll = () => (
  <div className="flex w-[22px] shrink-0 flex-col items-center border-l border-[#ababab] bg-[#e6e6e6] pt-[2px] pl-[3px]">
    <div className="flex h-[15px] w-[15px] items-center justify-center border border-[#8a8a8a] bg-white">
      <div className="h-0 w-0 border-x-[4px] border-b-[4px] border-x-transparent border-b-[#333]" />
    </div>
    <div className="mt-px h-[17px] w-[15px] border border-[#8a8a8a] bg-white" />
    <div className="mt-auto flex h-[15px] w-[15px] items-center justify-center border border-[#8a8a8a] bg-white">
      <div className="h-0 w-0 border-x-[4px] border-t-[4px] border-x-transparent border-t-[#333]" />
    </div>
  </div>
);

const SHEETS = [
  ["タイトル", "w-[66px] tracking-[-2px]"],
  ["更新履歴", "w-[76px]"],
  ["基本情報", "w-[76px]"],
  ["画面遷移フロー", "w-[106px] tracking-[-1.4px]"],
];

const SheetTabs = () => (
  <div className="flex h-[28px] shrink-0 border-t-2 border-[#a6a6a6] bg-[#e6e6e6] text-[13px] whitespace-nowrap text-[#444]">
    <div className="flex w-[100px] items-center border-r border-[#a6a6a6] pl-[26px] text-[#c0c0c0]">
      <div className="h-0 w-0 border-y-[4px] border-r-[4px] border-y-transparent border-r-[#c0c0c0]" />
      <div className="ml-[25px] h-0 w-0 border-y-[4px] border-l-[4px] border-y-transparent border-l-[#c0c0c0]" />
    </div>
    {SHEETS.map(([t, w]) => (
      <div key={t} className={`my-[2px] flex items-center justify-center border-r border-[#a6a6a6] ${w}`}>{t}</div>
    ))}
    <div className="-mt-[2px] flex w-[92px] items-center justify-center border-b-[3px] border-[#217346] bg-white pt-[2px] tracking-[-2px] text-[#1b6b40]">タイトル画面</div>
    <div className="my-[2px] flex w-[82px] items-center justify-center border-r border-[#a6a6a6] tracking-[-1px]">ゲーム画面</div>
    <div className="ml-[34px] flex h-[16px] w-[16px] items-center justify-center self-center rounded-full border border-[#777] text-[#777]"><Plus size={11} strokeWidth={2} /></div>
    <div className="ml-[171px] flex h-[14px] w-[3px] flex-col justify-center gap-[2px] self-center">
      <div className="h-[2px] w-[2px] bg-[#b0b0b0]" /><div className="h-[2px] w-[2px] bg-[#b0b0b0]" /><div className="h-[2px] w-[2px] bg-[#b0b0b0]" />
    </div>
    <div className="mt-[6px] ml-[13px] flex h-[15px] w-[509px] border border-[#8a8a8a] bg-[#e6e6e6]">
      <div className="flex w-[14px] items-center justify-center border-r border-[#8a8a8a] bg-white">
        <div className="h-0 w-0 border-y-[4px] border-r-[4px] border-y-transparent border-r-[#333]" />
      </div>
      <div className="w-[456px] border-r border-[#8a8a8a] bg-white" />
      <div className="ml-auto flex w-[14px] items-center justify-center border-l border-[#8a8a8a] bg-white">
        <div className="h-0 w-0 border-y-[4px] border-l-[4px] border-y-transparent border-l-[#333]" />
      </div>
    </div>
  </div>
);

const StatusBar = () => (
  <div className="flex h-[21px] shrink-0 items-center border-t border-[#d0d0d0] bg-[#f3f2f1] text-[12px] whitespace-nowrap text-[#555]">
    <span className="ml-[8px]">準備完了</span>
    <svg width="16" height="16" viewBox="0 0 16 16" fill="none" stroke="#555" className="ml-[18px]">
      <circle cx="8" cy="3" r="2" /><path d="M1 6l7 1 7-1M6 7l-1 8M10 7l1 4" /><path d="M10 11l4 4m0-4l-4 4" />
    </svg>
    <span className="ml-[2px] text-[11.5px] tracking-[-1.2px]">アクセシビリティ: 検討が必要です</span>
    <div className="ml-auto flex h-full w-[39px] items-center justify-center bg-[#d2d2d2]">
      <svg width="14" height="14" viewBox="0 0 14 14" fill="none" stroke="#444"><path d="M.5.5h13v13H.5zM.5 5h13M.5 9.5h13M5 .5v13M9.5.5v13" /></svg>
    </div>
    <svg width="14" height="14" viewBox="0 0 14 14" fill="none" stroke="#444" className="ml-[14px]"><path d="M.5.5h13v13H.5zM3 3h8v8H3zM5 5.5h4M5 8h4" /></svg>
    <svg width="14" height="14" viewBox="0 0 14 14" fill="none" stroke="#444" className="ml-[26px]"><path d="M.5.5h13v13H.5zM.5 9h8V.5" /></svg>
    <span className="ml-[20px] text-[13px]">−</span>
    <div className="relative ml-[4px] flex h-[10px] w-[100px] items-center">
      <div className="h-px w-full bg-[#555]" />
      <div className="absolute left-[27px] h-[10px] w-[4px] bg-[#444]" />
      <div className="absolute left-[50px] h-[6px] w-px bg-[#555]" />
    </div>
    <span className="ml-[5px] text-[13px]">+</span>
    <span className="mr-[16px] ml-[15px]">60%</span>
  </div>
);

const TaskIcon = ({ className = "w-[46px]", active, children }) => (
  <div className={`relative flex h-[40px] shrink-0 items-center justify-center ${className} ${active ? "bg-[#3f5a64]" : ""}`}>
    {children}
  </div>
);

const Taskbar = () => (
  <div className="flex h-[40px] shrink-0 items-center whitespace-nowrap bg-linear-to-r from-[#1f3843] to-[#1c2a42] text-white">
    <div className="flex w-[48px] shrink-0 justify-center">
      <svg width="16" height="16" viewBox="0 0 16 16" fill="#fff"><path d="M0 2.3l6.8-1v6.3H0zM7.6 1.2L16 0v7.6H7.6zM0 8.4h6.8v6.3L0 13.7zM7.6 8.4H16V16l-8.4-1.2z" /></svg>
    </div>
    <div className="flex h-[40px] w-[288px] shrink-0 items-center bg-[#f3f3f3] pr-[4px] text-[13px] text-[#222]">
      <Search size={16} strokeWidth={1.3} className="ml-[12px] -scale-x-100" />
      <span className="ml-[11px] tracking-[-0.1px]">ここに入力して検索</span>
      <div className="ml-auto flex h-[32px] w-[72px] items-center justify-center rounded-[6px] bg-[#e3e3e3]">
        <svg width="30" height="28" viewBox="0 0 30 28">
          <path d="M10 5V2h10v3" fill="none" stroke="#333" strokeWidth="2" />
          <rect x="0" y="4" width="30" height="24" rx="2" fill="#e08a12" />
          <rect x="0" y="16" width="30" height="12" rx="1" fill="#a85d06" />
          <rect x="13" y="13" width="4" height="5" fill="#ffd54a" />
        </svg>
      </div>
    </div>
    <TaskIcon className="ml-[6px] w-[44px]">
      <svg width="16" height="18" viewBox="0 0 16 18" fill="none" stroke="#fff"><path d="M1 1h8M1 5.5h8v7H1zM1 17h8M13 1h2v2h-2zM13 7h2v2h-2z" /></svg>
    </TaskIcon>
    <TaskIcon className="w-[46px]">
      <svg width="24" height="24" viewBox="0 0 24 24">
        <path d="M1 3h8l2 2h12v4H1z" fill="#d8a72a" />
        <rect x="1" y="7" width="22" height="15" fill="#fbd96a" />
        <path d="M8 22v-6h8v6h-2v-3h-4v3z" fill="#2b88d8" />
      </svg>
      <div className="absolute inset-x-[4px] bottom-0 h-[2px] bg-[#77b7e6]" />
    </TaskIcon>
    <TaskIcon className="w-[55px]">
      <svg width="26" height="24" viewBox="0 0 26 24">
        <circle cx="14" cy="12" r="12" fill="#e8694a" />
        <rect x="0" y="5" width="14" height="14" rx="1" fill="#c43e1c" />
        <text x="3" y="16" fontSize="11" fontWeight="bold" fill="#fff" fontFamily="Liberation Sans">P</text>
      </svg>
    </TaskIcon>
    <TaskIcon className="w-[46px]"><Chrome /></TaskIcon>
    <TaskIcon className="w-[46px]" active>
      <svg width="26" height="24" viewBox="0 0 26 24">
        <rect x="6" y="0" width="20" height="24" rx="1" fill="#21a366" />
        <rect x="16" y="0" width="10" height="12" fill="#33c481" />
        <rect x="6" y="12" width="20" height="12" fill="#107c41" />
        <rect x="0" y="5" width="14" height="14" rx="1" fill="#185c37" />
        <text x="3" y="16" fontSize="11" fontWeight="bold" fill="#fff" fontFamily="Liberation Sans">X</text>
      </svg>
      <div className="absolute inset-x-0 bottom-0 h-[2px] bg-[#77b7e6]" />
    </TaskIcon>
    <TaskIcon className="w-[50px]">
      <svg width="26" height="24" viewBox="0 0 26 24">
        <rect x="6" y="0" width="20" height="24" rx="1" fill="#2b7cd3" />
        <rect x="6" y="0" width="20" height="8" fill="#41a5ee" />
        <rect x="6" y="16" width="20" height="8" fill="#185abd" />
        <rect x="0" y="5" width="14" height="14" rx="1" fill="#103f91" />
        <text x="2" y="16" fontSize="11" fontWeight="bold" fill="#fff" fontFamily="Liberation Sans">W</text>
      </svg>
      <div className="absolute inset-x-[3px] bottom-0 h-[2px] bg-[#77b7e6]" />
    </TaskIcon>
    <TaskIcon className="ml-[2px] w-[46px]">
      <Chrome />
      <div className="absolute top-[18px] left-[22px] flex h-[15px] w-[15px] items-center justify-center rounded-full bg-[#5d9b3a] text-[7px]">秀夫</div>
      <div className="absolute inset-x-[4px] bottom-0 h-[2px] bg-[#77b7e6]" />
    </TaskIcon>

    <svg width="26" height="24" viewBox="0 0 26 24" className="ml-[232px] shrink-0">
      <circle cx="17" cy="8" r="7" fill="#f5a623" />
      <path d="M3 22a5 5 0 0 1 0-9 8 8 0 0 1 13-3 7 7 0 0 1 7 12z" fill="#b8d8f5" />
    </svg>
    <span className="ml-[7px] w-[28px] shrink-0 text-[13px] tracking-[-0.5px]">27℃</span>
    <span className="ml-[10px] w-[76px] shrink-0 text-[12px] tracking-[-1.2px]">くもりのち晴れ</span>
    <ChevronUp size={16} strokeWidth={1.3} className="ml-[24px] shrink-0" />
    <svg width="12" height="18" viewBox="0 0 12 18" fill="none" stroke="#fff" className="ml-[11px] shrink-0"><path d="M3 1h6M3 17h6" /><rect x="1" y="5" width="7" height="8" rx="1" /><path d="M8 8l3-2v6l-3-2" /></svg>
    <div className="relative ml-[9px] h-[18px] w-[16px] shrink-0 border border-white">
      <div className="absolute -right-[4px] -bottom-[3px] h-[7px] w-[7px] rounded-full bg-[#e60023]" />
    </div>
    <svg width="16" height="14" viewBox="0 0 16 14" fill="none" stroke="#fff" className="ml-[9px] shrink-0"><path d="M1 3h3M1 9h3M4 1v10h2M7 3.5h8v7H7z" /><path d="M8.5 5h2v4h-2z" fill="#fff" /></svg>
    <svg width="16" height="14" viewBox="0 0 16 14" fill="none" stroke="#ccc" className="ml-[9px] shrink-0"><path d="M1 13C2 8 7 3 14 1M5 13c1-3 4-6 9-8M9 13c0-2 2-4 5-4" /></svg>
    <svg width="16" height="14" viewBox="0 0 16 14" fill="none" stroke="#fff" className="ml-[7px] shrink-0"><path d="M1 5h3l4-4v12l-4-4H1zM11 4c1 2 1 4 0 6M13 2c2 3 2 7 0 10" /></svg>
    <span className="ml-[6px] shrink-0 text-[16px] font-medium">あ</span>
    <div className="ml-[14px] flex w-[64px] shrink-0 flex-col items-center text-[11px] leading-[18px]">
      <span>15:45</span>
      <span>2023/07/05</span>
    </div>
    <svg width="16" height="17" viewBox="0 0 16 17" fill="none" stroke="#fff" className="ml-[9px] shrink-0"><path d="M.5.5h15v12h-5l-2.5 3-2.5-3h-5z" /></svg>
  </div>
);

export default function App() {
  return (
    <div className="flex h-[768px] w-[1366px] flex-col overflow-hidden bg-white font-['Noto_Sans_CJK_JP',sans-serif] [text-spacing-trim:space-all]">
      <TitleBar />
      <TabRow />
      <Ribbon />
      <FormulaBar />
      <div className="flex h-[466px] shrink-0 bg-[#e6e6e6]">
        <div className="flex w-[1344px] shrink-0 flex-col">
          <ColumnHeader />
          <div className="flex h-[454px]">
            <RowHeader />
            <Sheet />
          </div>
        </div>
        <VScroll />
      </div>
      <SheetTabs />
      <StatusBar />
      <Taskbar />
    </div>
  );
}
